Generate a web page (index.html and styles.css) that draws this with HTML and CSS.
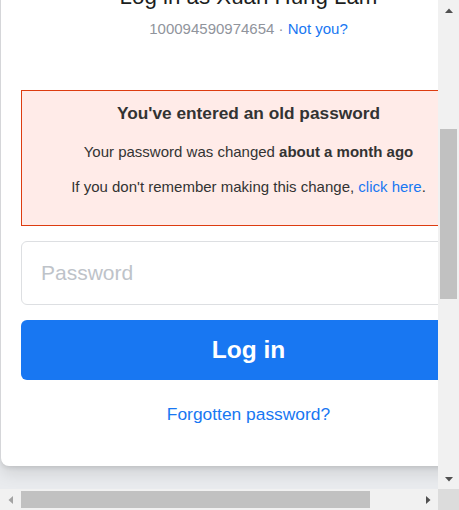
FILE: index.html
```html
<!DOCTYPE html>
<html>
<head>
<meta charset="utf-8">
<link rel="stylesheet" href="styles.css">
</head>
<body>
<div class="window">
  <div class="content">
    <div class="page">
      <div class="card">
        <h2 class="title">Log in as Xuân Hùng Lâm</h2>
        <div class="uid"><span class="id">100094590974654</span><span class="dot"> · </span><a class="link" href="#">Not you?</a></div>
        <div class="alert">
          <div class="alert-head">You've entered an old password</div>
          <div class="alert-line">Your password was changed <b>about a month ago</b></div>
          <div class="alert-line second">If you don't remember making this change, <a class="link" href="#">click here</a>.</div>
        </div>
        <input class="pw" type="password" placeholder="Password">
        <button class="login">Log in</button>
        <a class="forgot" href="#">Forgotten password?</a>
      </div>
    </div>
  </div>
  <div class="vbar">
    <div class="sbtn"><svg width="10" height="6" viewBox="0 0 10 6"><polygon points="5,0.5 9,5 1,5" fill="#505050"/></svg></div>
    <div class="vtrack"><div class="vthumb"></div></div>
    <div class="sbtn"><svg width="10" height="6" viewBox="0 0 10 6"><polygon points="1,1 9,1 5,5.5" fill="#505050"/></svg></div>
  </div>
  <div class="hbar">
    <div class="sbtn"><svg width="6" height="10" viewBox="0 0 6 10"><polygon points="0.5,5 5,1 5,9" fill="#a3a3a3"/></svg></div>
    <div class="htrack"><div class="hthumb"></div></div>
    <div class="sbtn"><svg width="6" height="10" viewBox="0 0 6 10"><polygon points="1,1 5.5,5 1,9" fill="#505050"/></svg></div>
  </div>
  <div class="corner"></div>
</div>
</body>
</html>
```
FILE: styles.css
```css
html, body {
  margin: 0;
  padding: 0;
  overflow: hidden;
}
body {
  font-family: "Liberation Sans", Arial, Helvetica, sans-serif;
  color: #1c1e21;
}
.window {
  width: 459px;
  height: 510px;
  display: grid;
  grid-template-columns: 438px 21px;
  grid-template-rows: 489px 21px;
}
.content {
  overflow: hidden;
  background: #e9ebee;
}
.page {
  width: 497px;
  margin-top: -36px;
}
.card {
  margin-left: 1px;
  width: 495px;
  box-sizing: border-box;
  background: #fff;
  border-radius: 8px;
  box-shadow: 0 2px 4px rgba(0, 0, 0, 0.1), 0 8px 16px rgba(0, 0, 0, 0.1);
  padding: 20px 20px 41px;
  display: flex;
  flex-direction: column;
  align-items: stretch;
}
.title {
  margin: 0;
  font-weight: normal;
  font-size: 22.3px;
  line-height: 26px;
  text-align: center;
  color: #1c1e21;
}
.uid {
  margin-top: 9px;
  font-size: 15px;
  line-height: 20px;
  text-align: center;
  color: #90949c;
}
.dot {
  color: #90949c;
}
.link {
  color: #1877f2;
  text-decoration: none;
}
.alert {
  margin-top: 51px;
  border: 1px solid #dd3c10;
  background: #ffebe8;
  padding: 11px 10px 28px;
  text-align: center;
  color: #333;
}
.alert-head {
  font-weight: bold;
  font-size: 17.3px;
  line-height: 22px;
}
.alert-line {
  margin-top: 18px;
  font-size: 15px;
  line-height: 20px;
}
.alert-line.second {
  margin-top: 15px;
}
.pw {
  margin-top: 15px;
  height: 64px;
  box-sizing: border-box;
  border: 1px solid #dddfe2;
  border-radius: 6px;
  padding: 0 19px;
  font-family: "Liberation Sans", Arial, sans-serif;
  font-size: 21px;
  color: #1c1e21;
  background: #fff;
  outline: none;
}
.pw::placeholder {
  color: #bec3c9;
  opacity: 1;
}
.login {
  margin-top: 15px;
  height: 60px;
  border: none;
  border-radius: 6px;
  background: #1877f2;
  color: #fff;
  font-family: "Liberation Sans", Arial, sans-serif;
  font-weight: bold;
  font-size: 24.5px;
  padding: 0;
}
.forgot {
  margin-top: 23px;
  font-size: 17.4px;
  line-height: 22px;
  text-align: center;
  color: #1877f2;
  text-decoration: none;
}
.vbar {
  background: #f1f1f1;
  display: flex;
  flex-direction: column;
}
.sbtn {
  width: 21px;
  height: 21px;
  flex: 0 0 21px;
  display: flex;
  align-items: center;
  justify-content: center;
}
.vtrack {
  flex: 1;
}
.vthumb {
  margin-top: 108px;
  margin-left: 2px;
  width: 17px;
  height: 170px;
  background: #c1c1c1;
}
.hbar {
  background: #f1f1f1;
  display: flex;
  flex-direction: row;
}
.htrack {
  flex: 1;
}
.hthumb {
  margin-top: 2px;
  width: 349px;
  height: 17px;
  background: #c1c1c1;
}
.corner {
  background: #dcdcdc;
}
```
